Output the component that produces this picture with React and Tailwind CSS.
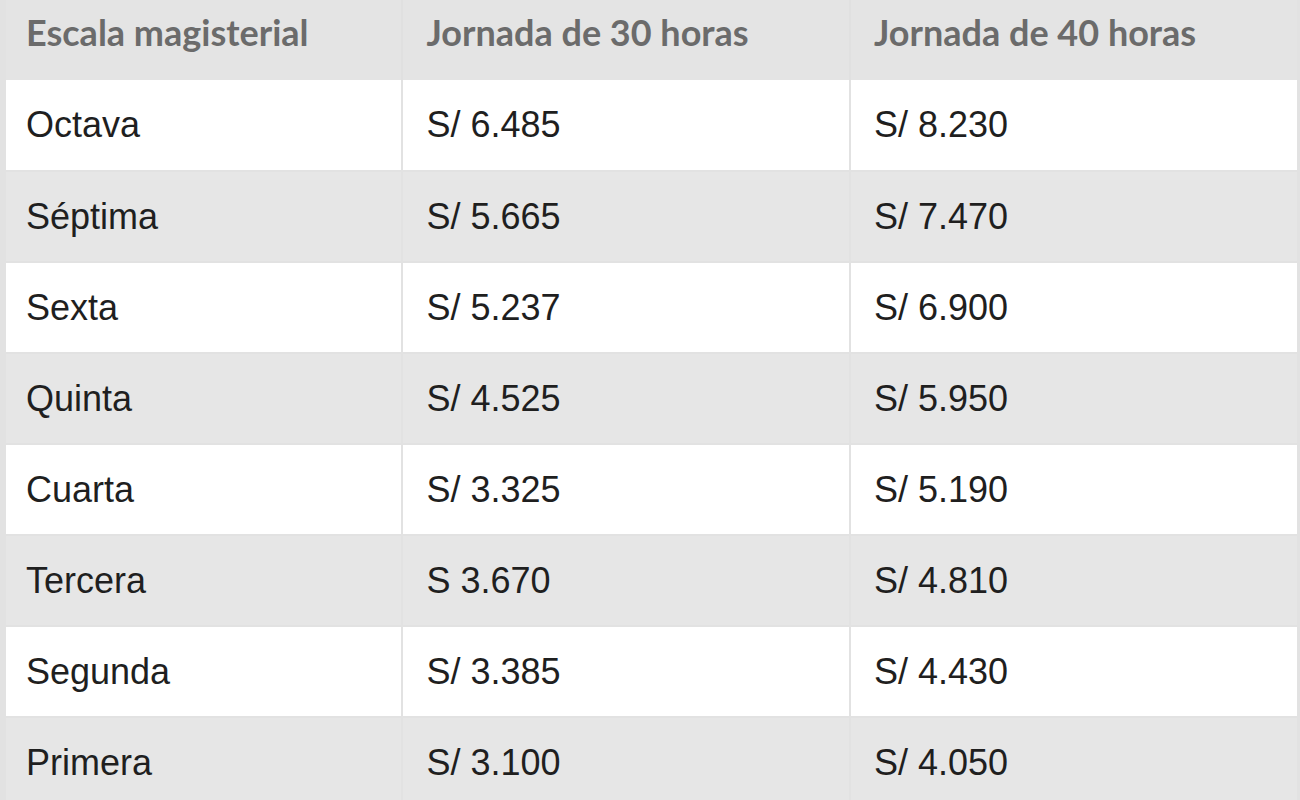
import React from "react";

const rows = [
  ["Octava", "S/ 6.485", "S/ 8.230"],
  ["Séptima", "S/ 5.665", "S/ 7.470"],
  ["Sexta", "S/ 5.237", "S/ 6.900"],
  ["Quinta", "S/ 4.525", "S/ 5.950"],
  ["Cuarta", "S/ 3.325", "S/ 5.190"],
  ["Tercera", "S 3.670", "S/ 4.810"],
  ["Segunda", "S/ 3.385", "S/ 4.430"],
  ["Primera", "S/ 3.100", "S/ 4.050"],
];

export default function App() {
  return (
    <div className="w-[1300px] h-[800px] overflow-hidden bg-[#e4e4e4]">
      <table className="w-[1300px] border-collapse table-fixed border-l-[6px] border-r-[3px] border-[#e2e2e2]">
        <colgroup>
          <col className="w-[399px]" />
          <col className="w-[447px]" />
          <col className="w-[448px]" />
        </colgroup>
        <thead>
          <tr className="bg-[#e4e4e4]">
            {["Escala magisterial", "Jornada de 30 horas", "Jornada de 40 horas"].map((h, i) => (
              <th
                key={h}
                className={`h-[80px] align-top pt-[11px] text-left font-bold text-[36px] leading-[43px] text-[#6b6b6b] font-['Lato',sans-serif] ${
                  i === 0 ? "pl-[20px]" : "pl-[23px] border-l-2 border-[#e0e0e0]"
                }`}
              >
                {h}
              </th>
            ))}
          </tr>
        </thead>
        <tbody>
          {rows.map((r, idx) => (
            <tr
              key={r[0]}
              className={`h-[91px] border-b-2 border-[#e2e2e2] ${
                idx % 2 === 0 ? "bg-white" : "bg-[#e6e6e6]"
              }`}
            >
              {r.map((c, i) => (
                <td
                  key={i}
                  className={`align-middle text-[36px] text-[#1f1f1f] font-['Liberation_Sans',Arial,sans-serif] ${
                    i === 0 ? "pl-[20px]" : "pl-[23px] border-l-2 border-[#e2e2e2]"
                  }`}
                >
                  {c}
                </td>
              ))}
            </tr>
          ))}
        </tbody>
      </table>
    </div>
  );
}
